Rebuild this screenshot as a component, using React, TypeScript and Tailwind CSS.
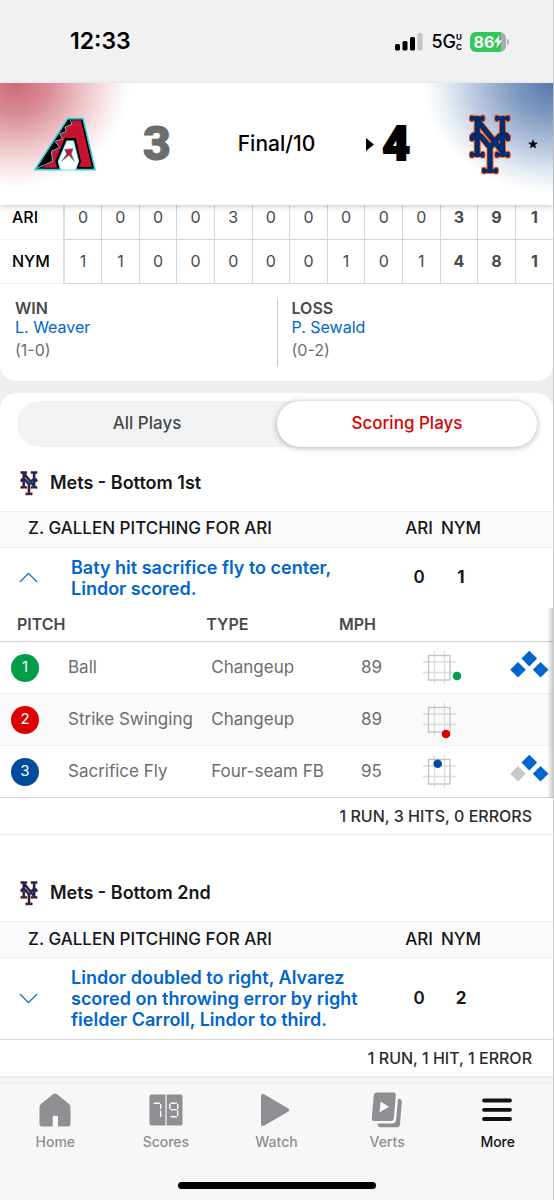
import React, { useState } from "react";
import { ChevronDown, ChevronUp } from "lucide-react";
import { clsx } from "clsx";

const innings = [
  { team: "ARI", runs: [0, 0, 0, 0, 3, 0, 0, 0, 0, 0], totals: [3, 9, 1] },
  { team: "NYM", runs: [1, 1, 0, 0, 0, 0, 0, 1, 0, 1], totals: [4, 8, 1] },
];

const decisions = [
  { label: "WIN", player: "L. Weaver", record: "(1-0)" },
  { label: "LOSS", player: "P. Sewald", record: "(0-2)" },
];

type Pitch = {
  result: string;
  type: string;
  mph: number;
  color: string;
  badge: string;
  spot: [number, number];
  // third, second, first
  bases?: [boolean, boolean, boolean];
};

type Inning = {
  title: string;
  pitching: string;
  play: string;
  score: [number, number];
  summary: string;
  pitches: Pitch[];
};

const scoring: Inning[] = [
  {
    title: "Mets - Bottom 1st",
    pitching: "Z. GALLEN PITCHING FOR ARI",
    play: "Baty hit sacrifice fly to center, Lindor scored.",
    score: [0, 1],
    summary: "1 RUN, 3 HITS, 0 ERRORS",
    pitches: [
      {
        result: "Ball",
        type: "Changeup",
        mph: 89,
        color: "#009c48",
        badge: "bg-[#009c48]",
        spot: [37, 27],
        bases: [true, true, true],
      },
      {
        result: "Strike Swinging",
        type: "Changeup",
        mph: 89,
        color: "#dd0000",
        badge: "bg-[#dd0000]",
        spot: [26, 33],
      },
      {
        result: "Sacrifice Fly",
        type: "Four-seam FB",
        mph: 95,
        color: "#004c9b",
        badge: "bg-[#004c9b]",
        spot: [17.7, 10.7],
        bases: [false, true, true],
      },
    ],
  },
  {
    title: "Mets - Bottom 2nd",
    pitching: "Z. GALLEN PITCHING FOR ARI",
    play: "Lindor doubled to right, Alvarez scored on throwing error by right fielder Carroll, Lindor to third.",
    score: [0, 2],
    summary: "1 RUN, 1 HIT, 1 ERROR",
    pitches: [],
  },
];

const MetsLogo = ({ className }: { className?: string }) => {
  const lines =
    "M383 52V164M462 52V164M379 52L464 158M368 113C368 98 388 98 398 112L423 142L448 112C458 98 478 98 478 113M423 140V214";
  const feet =
    "M368 51H398M447 51H477M368 165H398M447 165H477M406 216H440";
  const tips =
    "M366 48V54M400 48V54M445 48V54M479 48V54M366 162V168M400 162V168M445 162V168M479 162V168M404 212V218M442 212V218M366 110V116M480 110V116";
  return (
    <svg viewBox="354 36 138 191" className={className} aria-hidden="true">
      <g fill="none" stroke="#ff5910" strokeLinecap="round" strokeLinejoin="round">
        <path d={lines} strokeWidth="22" />
        <path d={feet} strokeWidth="17" />
        <path d={tips} strokeWidth="18" />
      </g>
      <g fill="none" stroke="#002d72" strokeLinecap="round" strokeLinejoin="round">
        <path d={lines} strokeWidth="16" />
        <path d={feet} strokeWidth="11" />
        <path d={tips} strokeWidth="12" />
      </g>
      <path d="M396 88L424 122" stroke="#ff5910" strokeWidth="2" />
    </svg>
  );
};

const DiamondbacksLogo = ({ className }: { className?: string }) => (
  <svg viewBox="38 52 192 164" className={className} aria-hidden="true">
    <path
      d="M142 58H188L224 211H166L172 188L158 130H141L116 188L120 211H44Z"
      fill="#000"
      stroke="#30ced8"
      strokeWidth="5"
      strokeLinejoin="round"
    />
    <path d="M139 124H160L176 186L166 212H121L113 186Z" fill="#fff" stroke="#30ced8" strokeWidth="2" />
    <path
      d="M155 63H184L217 205H172L180 186L165 118H135L107 184L112 205H64L98 186L94 156L118 144L105 127L128 119L119 104L139 97L134 83L155 76Z"
      fill="#c41230"
    />
    <path
      d="M184 63L217 205H172L180 186L165 118H135L107 184L112 205"
      fill="none"
      stroke="#000"
      strokeWidth="4"
    />
    <path
      d="M50 207L97 186L93 156L118 144L104 126L127 119L118 103L138 97L134 83L155 75L150 62"
      fill="none"
      stroke="#7fb9bd"
      strokeWidth="3"
    />
    <path
      d="M133 150L158 148L153 164L162 186L146 168L124 186L139 164Z"
      fill="#c41230"
      stroke="#30a5b0"
      strokeWidth="2"
    />
  </svg>
);

const StrikeZone = ({ color, spot }: { color: string; spot: [number, number] }) => (
  <svg viewBox="0 0 42 38" width="42" height="38" className="mx-auto block" aria-hidden="true">
    <path d="M14.5 2V35M24.5 2V35M3 13H36M3 23.5H36" stroke="#dcdde0" strokeWidth="1.3" />
    <rect x="8.5" y="6.5" width="21.5" height="24.5" fill="none" stroke="#c4c5c9" strokeWidth="1.4" />
    <circle cx={spot[0]} cy={spot[1]} r="4.3" fill={color} />
  </svg>
);

const Bases = ({ bases }: { bases: [boolean, boolean, boolean] }) => {
  const spots = ["8 12", "19.3 .8", "30.6 12"];
  return (
    <svg viewBox="0 0 39 36" width="39" height="36" className="ml-auto block" aria-hidden="true">
      {spots.map((s, i) => (
        <path key={s} d={`M${s}l7.8 7.8l-7.8 7.8l-7.8 -7.8z`} fill={bases[i] ? "#0066cc" : "#c8c9cb"} />
      ))}
    </svg>
  );
};

const StatusBar = () => (
  <div className="flex h-[83px] items-center justify-between bg-[#f0f1f3] pr-11 pl-[70px] text-black">
    <span className="text-[23px] font-semibold">12:33</span>
    <div className="flex items-center gap-2">
      <svg width="28" height="18" viewBox="0 0 28 18" aria-hidden="true">
        <rect x="0" y="11" width="5" height="6.5" rx="1.5" />
        <rect x="7.5" y="8" width="5" height="9.5" rx="1.5" />
        <rect x="15" y="4" width="5" height="13.5" rx="1.5" />
        <rect x="22.5" y="0" width="5" height="17.5" rx="1.5" fill="#c3c4c6" />
      </svg>
      <div className="flex items-center">
        <span className="text-lg font-medium">5G</span>
        <span className="flex flex-col text-[8px] leading-[10px] font-bold">
          <span>U</span>
          <span>C</span>
        </span>
      </div>
      <div className="flex items-center gap-px">
        <div className="flex h-5 w-9 items-center justify-center rounded-md bg-linear-to-r from-[#34c759] from-85% to-[#a9abad] to-85% text-base font-bold text-white">
          86
          <svg width="8" height="13" viewBox="0 0 8 13" fill="currentColor" aria-hidden="true">
            <path d="M5.5 0L0 7.3H3.4L2.5 13L8 5.4H4.6Z" />
          </svg>
        </div>
        <div className="h-1.5 w-0.5 rounded-r bg-[#b3b4b8]" />
      </div>
    </div>
  </div>
);

const GameHeader = () => (
  <header className="relative z-10 grid h-[122px] grid-cols-[1fr_auto_1fr] items-center bg-white bg-[radial-gradient(ellipse_115px_105px_at_15px_0,#cc6a78,#d98c96_30%,#ecc3c8_60%,#faecee_85%,#ffffff00),radial-gradient(ellipse_130px_110px_at_100%_0,#5577aa,#7f99c1_30%,#b9c7de_60%,#e9eef5_85%,#ffffff00)] shadow-[0_2px_5px_rgba(0,0,0,0.18)]">
    <div className="flex items-center gap-[46px] pl-[33px]">
      <DiamondbacksLogo className="h-14 w-16" />
      <span className="font-[Roboto] text-5xl font-black text-[#6c6d6f] [-webkit-text-stroke:1px_#6c6d6f]">3</span>
    </div>
    <span className="text-[21px] font-medium text-black">Final/10</span>
    <div className="flex items-center justify-end pr-[15px]">
      <svg width="8" height="13" viewBox="0 0 8 13" className="mr-2" aria-hidden="true">
        <path d="M0 0L8 6.5L0 13Z" />
      </svg>
      <span className="mr-[58px] font-[Roboto] text-5xl font-black text-black [-webkit-text-stroke:2px_#000]">4</span>
      <MetsLogo className="mr-4 h-16 w-11" />
      <svg width="10" height="10" viewBox="0 0 24 24" aria-hidden="true">
        <path d="M12 0L15 8.5L24 8.8L17 14.4L19.4 23L12 18L4.6 23L7 14.4L0 8.8L9 8.5Z" />
      </svg>
    </div>
  </header>
);

const LineScore = () => (
  <table className="w-full table-fixed border-collapse text-base text-[#48494a]">
    <tbody>
      {innings.map((row) => (
        <tr key={row.team} className="h-11">
          <th
            scope="row"
            className="w-16 border-r-2 border-b border-r-[#dcdddf] border-b-[#f1f2f3] pl-3 text-left font-medium text-black"
          >
            {row.team}
          </th>
          {row.runs.map((run, i) => (
            <td key={i} className="border-r border-b border-[#d5d6da] text-center">
              {run}
            </td>
          ))}
          {row.totals.map((total, i) => (
            <td key={i} className="border-r border-b border-[#d5d6da] text-center font-bold last:border-r-0">
              {total}
            </td>
          ))}
        </tr>
      ))}
    </tbody>
  </table>
);

const Decisions = () => (
  <div className="grid grid-cols-2 px-[15px] pt-[15px] pb-3.5">
    {decisions.map((d, i) => (
      <div key={d.label} className={clsx("h-[68px]", i > 0 && "border-l border-[#c9cacc] pl-[14px]")}>
        <p className="text-base leading-[19px] font-semibold text-[#48494a]">{d.label}</p>
        <a href="#" className="block text-base leading-[19px] text-[#0066cc]">
          {d.player}
        </a>
        <p className="text-base leading-[26px] text-[#6c6d6f]">{d.record}</p>
      </div>
    ))}
  </div>
);

const PitchTable = ({ pitches }: { pitches: Pitch[] }) => (
  <div className="relative">
    <table className="w-full table-fixed border-collapse text-[17px] text-[#6c6d6f]">
      <colgroup>
        <col className="w-[68px]" />
        <col className="w-[25%]" />
        <col className="w-[24%]" />
        <col className="w-[12%]" />
        <col className="w-[13%]" />
        <col />
      </colgroup>
      <thead>
        <tr className="h-[34px] border-b border-[#cfd0d2] text-left text-base text-[#48494a]">
          <th colSpan={2} className="pl-[17px] font-semibold">
            PITCH
          </th>
          <th className="font-semibold">TYPE</th>
          <th className="font-semibold">MPH</th>
          <th />
          <th />
        </tr>
      </thead>
      <tbody>
        {pitches.map((p, i) => (
          <tr key={i} className="h-[52px] border-b border-[#f1f2f3] last:border-[#d5d6da] even:bg-[#fafafa]">
            <td className="pl-[11px]">
              <span
                className={clsx("flex size-7 items-center justify-center rounded-full text-[15px] text-white", p.badge)}
              >
                {i + 1}
              </span>
            </td>
            <td className="whitespace-nowrap">{p.result}</td>
            <td className="pl-[5px] whitespace-nowrap">{p.type}</td>
            <td className="pl-[22px]">{p.mph}</td>
            <td>
              <StrikeZone color={p.color} spot={p.spot} />
            </td>
            <td className="pr-1">{p.bases && <Bases bases={p.bases} />}</td>
          </tr>
        ))}
      </tbody>
    </table>
    <div className="absolute inset-y-0 right-0 w-1.5 bg-linear-to-l from-black/20 to-transparent" />
  </div>
);

const InningPlays = ({ inning, open, onToggle }: { inning: Inning; open: boolean; onToggle: () => void }) => {
  const Chevron = open ? ChevronUp : ChevronDown;
  return (
    <section>
      <h2 className="flex items-center gap-3 px-5 pt-[18px] pb-3.5 text-lg leading-7 font-semibold text-[#151617]">
        <MetsLogo className="h-7 w-[18px]" />
        {inning.title}
      </h2>
      <table className="w-full table-fixed border-collapse text-[#151617]">
        <colgroup>
          <col className="w-[71px]" />
          <col />
          <col className="w-[42px]" />
          <col className="w-[42px]" />
          <col className="w-[71px]" />
        </colgroup>
        <thead>
          <tr className="h-9 border-y border-[#ecedef] bg-[#fafafa] text-[17px]">
            <th colSpan={2} className="pl-7 text-left font-medium">
              {inning.pitching}
            </th>
            <th className="font-medium">ARI</th>
            <th className="font-medium">NYM</th>
            <th />
          </tr>
        </thead>
        <tbody>
          <tr className="text-center text-[17px] font-semibold">
            <td className="text-left">
              <button
                type="button"
                aria-label={open ? "Hide pitches" : "Show pitches"}
                aria-expanded={open}
                className="ml-3 block text-[#0066cc]"
                onClick={onToggle}
              >
                <Chevron size={33} strokeWidth={1} />
              </button>
            </td>
            <td className="py-[9px] pr-5 text-left text-lg leading-[21px] font-semibold text-[#0066cc]">
              {inning.play}
            </td>
            <td>{inning.score[0]}</td>
            <td className="font-bold">{inning.score[1]}</td>
            <td />
          </tr>
        </tbody>
      </table>
      {open && inning.pitches.length > 0 && <PitchTable pitches={inning.pitches} />}
      <p
        className={clsx(
          "border-b border-[#ecedef] pr-[21px] text-right text-base leading-9 font-medium text-[#2b2c2d]",
          (!open || inning.pitches.length === 0) && "border-t border-t-[#d5d6da]",
        )}
      >
        {inning.summary}
      </p>
    </section>
  );
};

const HomeIcon = () => (
  <svg width="32" height="34" viewBox="0 0 32 34" fill="currentColor" aria-hidden="true">
    <path d="M14 1.3Q16 -.4 18 1.3L29.5 10.5Q31.5 12 31.5 14V31Q31.5 33.5 29 33.5H19V24Q19 22.8 17.800 22.8H15Q13.700 22.8 13.700 24V33.5H3Q.5 33.5 .5 31V14Q.5 12 2.5 10.5Z" />
  </svg>
);

const ScoresIcon = () => (
  <svg width="34" height="34" viewBox="0 0 34 34" aria-hidden="true">
    <rect x=".5" y="1.5" width="33" height="31" rx="2" fill="currentColor" />
    <path d="M17 1V33" stroke="#f7f7f8" strokeWidth="1.2" />
    <g stroke="#f7f7f8" strokeWidth="1.5">
      <path d="M4.5 10.3H11M11.7 11V16M11.7 17.5V24" />
      <path d="M21.5 10.3H28M21.5 16.8H28M21.5 23.7H28M20.8 11V16M28.7 11V16M28.7 17.5V23" />
    </g>
  </svg>
);

const WatchIcon = () => (
  <svg width="32" height="34" viewBox="0 0 32 34" fill="currentColor" aria-hidden="true">
    <path d="M1 3Q1 0 4 1.3L28 15.2Q30.5 17 28 18.7L4 32.7Q1 34 1 31Z" />
  </svg>
);

const VertsIcon = () => (
  <svg width="32" height="36" viewBox="0 0 32 36" fill="currentColor" aria-hidden="true">
    <path d="M5.5 .5H22.5Q25 .5 24.8 3L22.8 26.5Q22.5 29 20 29H3Q.5 29 .8 26.5L2.8 3Q3 .5 5.5 .5ZM9.5 9.5L8.5 20.5L18 14.7Z" />
    <path d="M27 7H28.5Q31 7.3 30.8 10L29 32.5Q28.6 35.2 26 35.2H9Q6.7 35 6.7 31.5H21Q24.8 31.3 25.2 27.5Z" />
  </svg>
);

const MoreIcon = () => (
  <svg width="32" height="34" viewBox="0 0 32 34" aria-hidden="true">
    <path d="M2 7.5H28M2 16.8H28M2 26H28" stroke="currentColor" strokeWidth="3.8" strokeLinecap="round" />
  </svg>
);

const tabs = [
  { label: "Home", Icon: HomeIcon },
  { label: "Scores", Icon: ScoresIcon },
  { label: "Watch", Icon: WatchIcon },
  { label: "Verts", Icon: VertsIcon },
  { label: "More", Icon: MoreIcon },
];

const TabBar = () => (
  <nav className="flex-1 border-t border-[#e4e5e6] bg-[#f7f7f8]">
    <div className="mt-1 h-0.5 bg-[#f0f0f1]" />
    <div className="grid grid-cols-5 pt-2">
      {tabs.map(({ label, Icon }) => (
        <a
          key={label}
          href="#"
          className={clsx(
            "flex flex-col items-center text-sm font-medium",
            label === "More" ? "text-[#111112]" : "text-[#8e8e93]",
          )}
        >
          <span className="flex h-9 items-center">
            <Icon />
          </span>
          <span className="mt-1">{label}</span>
        </a>
      ))}
    </div>
    <div className="mx-auto mt-[30px] mb-2.5 h-[7px] w-[198px] rounded-full bg-black" />
  </nav>
);

const App = () => {
  const [view, setView] = useState("Scoring Plays");
  const [open, setOpen] = useState(0);

  return (
    <div className="flex min-h-screen flex-col border-r border-[#c9cacc] bg-[#edeef0] font-[Inter,sans-serif]">
      <StatusBar />
      <GameHeader />
      <div className="-mt-2.5 overflow-hidden rounded-b-2xl bg-white">
        <LineScore />
        <Decisions />
      </div>

      <main className="mt-3 rounded-t-2xl bg-white pt-2">
        <div className="mr-4 ml-[17px] grid h-[46px] grid-cols-2 rounded-full bg-[#f1f2f3]">
          {["All Plays", "Scoring Plays"].map((name) => (
            <button
              key={name}
              type="button"
              aria-pressed={view === name}
              className={clsx(
                "rounded-full text-[17px] font-medium",
                view === name ? "bg-white text-[#dd0000] shadow-[0_1px_6px_rgba(0,0,0,0.3)]" : "text-[#48494a]",
              )}
              onClick={() => setView(name)}
            >
              {name}
            </button>
          ))}
        </div>
        <div className="flex flex-col gap-[26px] pt-1">
          {scoring.map((inning, i) => (
            <InningPlays
              key={inning.title}
              inning={inning}
              open={open === i}
              onToggle={() => setOpen(open === i ? -1 : i)}
            />
          ))}
        </div>
      </main>
      <TabBar />
    </div>
  );
};

export default App;
